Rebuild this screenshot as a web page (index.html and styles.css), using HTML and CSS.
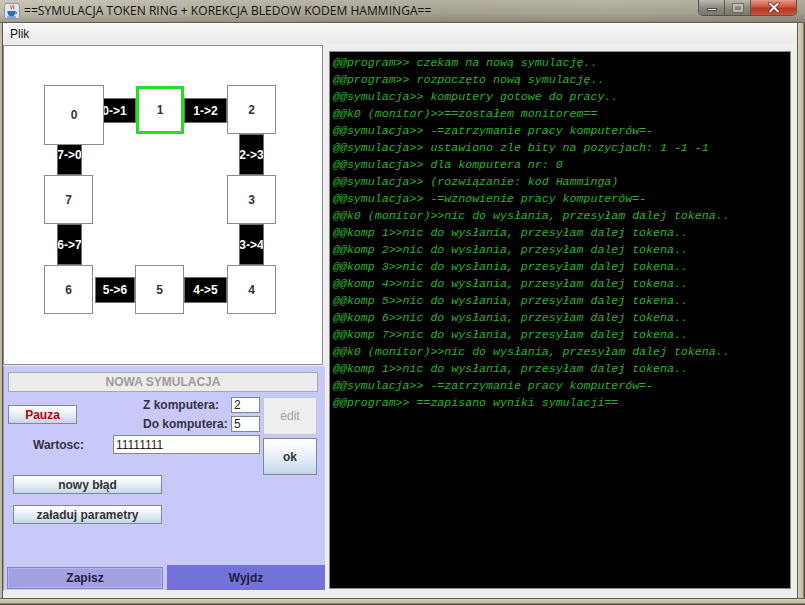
FILE: index.html
```html
<!DOCTYPE html>
<html>
<head>
<meta charset="utf-8">
<link rel="stylesheet" href="styles.css">
</head>
<body>
<div class="window">
  <div class="titlebar">
    <svg class="app-icon" width="16" height="16" viewBox="0 0 16 16">
      <rect x="0.5" y="0.5" width="15" height="15" rx="2" fill="#dfe6ee" stroke="#8a96a6"/>
      <path d="M7 2.5c-1.5 1.2 1.5 2 0 3.5M9.5 2c-1.8 1.4 1.6 2.3 0 4" stroke="#e0521c" stroke-width="1.2" fill="none"/>
      <path d="M3.5 8h8v1.2c0 2.5-1.8 4-4 4s-4-1.5-4-4z" fill="#2f6cb5"/>
      <path d="M11.5 9c1.6 0 1.6 2 0 2" stroke="#2f6cb5" stroke-width="1" fill="none"/>
      <path d="M3 14h9" stroke="#2f6cb5" stroke-width="1"/>
    </svg>
    <span class="title">==SYMULACJA TOKEN RING + KOREKCJA BLEDOW KODEM HAMMINGA==</span>
    <div class="wcontrols">
      <div class="wbtn wmin"><span class="glyph-min"></span></div>
      <div class="wbtn wmax"><span class="glyph-max"></span></div>
      <div class="wbtn wclose">
        <svg width="14" height="11" viewBox="0 0 14 11"><path d="M3 1.5l8 8M11 1.5l-8 8" stroke="#5a1a10" stroke-width="3.4" stroke-linecap="round"/><path d="M3 1.5l8 8M11 1.5l-8 8" stroke="#ffffff" stroke-width="2" stroke-linecap="round"/></svg>
      </div>
    </div>
  </div>
  <div class="middle">
    <div class="frame-l"></div>
    <div class="client">
      <div class="menubar"><span class="menu-item">Plik</span></div>
      <div class="main">
        <div class="leftcol">
          <div class="canvas">
            <div class="link h" style="left:89px;top:52px;width:43px;height:25px">0-&gt;1</div>
            <div class="link h" style="left:180px;top:52px;width:43px;height:25px">1-&gt;2</div>
            <div class="link v" style="left:235px;top:88px;width:25px;height:41px">2-&gt;3</div>
            <div class="link v" style="left:235px;top:178px;width:25px;height:41px">3-&gt;4</div>
            <div class="link h" style="left:180px;top:231px;width:43px;height:26px">4-&gt;5</div>
            <div class="link h" style="left:91px;top:231px;width:40px;height:26px">5-&gt;6</div>
            <div class="link v" style="left:53px;top:178px;width:25px;height:41px">6-&gt;7</div>
            <div class="link v" style="left:53px;top:88px;width:25px;height:41px">7-&gt;0</div>
            <div class="node big" style="left:40px;top:39px">0</div>
            <div class="node active" style="left:132px;top:40px">1</div>
            <div class="node" style="left:223px;top:39px">2</div>
            <div class="node" style="left:223px;top:129px">3</div>
            <div class="node" style="left:223px;top:219px">4</div>
            <div class="node" style="left:131px;top:219px">5</div>
            <div class="node" style="left:40px;top:219px">6</div>
            <div class="node" style="left:40px;top:129px">7</div>
          </div>
          <div class="panel">
            <div class="ns-bar">NOWA SYMULACJA</div>
            <div class="form">
              <div class="form-left">
                <div class="r1">
                  <div class="mbtn pauza">Pauza</div>
                  <div class="pair-grid">
                    <span class="lbl">Z komputera:</span><div class="input small">2</div>
                    <span class="lbl">Do komputera:</span><div class="input small">5</div>
                  </div>
                </div>
                <div class="r2">
                  <span class="lbl wart">Wartosc:</span>
                  <div class="input wide">11111111</div>
                </div>
              </div>
              <div class="form-right">
                <div class="mbtn edit disabled">edit</div>
                <div class="mbtn ok">ok</div>
              </div>
            </div>
            <div class="mbtn long first">nowy błąd</div>
            <div class="mbtn long second">załaduj parametry</div>
            <div class="bottom-row">
              <div class="zapisz">Zapisz</div>
              <div class="wyjdz">Wyjdz</div>
            </div>
          </div>
        </div>
        <div class="rightcol">
          <div class="console">
            <div class="ln">@@program&gt;&gt; czekam na nową symulację..</div>
            <div class="ln">@@program&gt;&gt; rozpoczęto nową symulację..</div>
            <div class="ln">@@symulacja&gt;&gt; komputery gotowe do pracy..</div>
            <div class="ln">@@k0 (monitor)&gt;&gt;==zostałem monitorem==</div>
            <div class="ln">@@symulacja&gt;&gt; -=zatrzymanie pracy komputerów=-</div>
            <div class="ln">@@symulacja&gt;&gt; ustawiono zle bity na pozycjach: 1 -1 -1</div>
            <div class="ln">@@symulacja&gt;&gt; dla komputera nr: 0</div>
            <div class="ln">@@symulacja&gt;&gt; (rozwiązanie: kod Hamminga)</div>
            <div class="ln">@@symulacja&gt;&gt; -=wznowienie pracy komputerów=-</div>
            <div class="ln">@@k0 (monitor)&gt;&gt;nic do wysłania, przesyłam dalej tokena..</div>
            <div class="ln">@@komp 1&gt;&gt;nic do wysłania, przesyłam dalej tokena..</div>
            <div class="ln">@@komp 2&gt;&gt;nic do wysłania, przesyłam dalej tokena..</div>
            <div class="ln">@@komp 3&gt;&gt;nic do wysłania, przesyłam dalej tokena..</div>
            <div class="ln">@@komp 4&gt;&gt;nic do wysłania, przesyłam dalej tokena..</div>
            <div class="ln">@@komp 5&gt;&gt;nic do wysłania, przesyłam dalej tokena..</div>
            <div class="ln">@@komp 6&gt;&gt;nic do wysłania, przesyłam dalej tokena..</div>
            <div class="ln">@@komp 7&gt;&gt;nic do wysłania, przesyłam dalej tokena..</div>
            <div class="ln">@@k0 (monitor)&gt;&gt;nic do wysłania, przesyłam dalej tokena..</div>
            <div class="ln">@@komp 1&gt;&gt;nic do wysłania, przesyłam dalej tokena..</div>
            <div class="ln">@@symulacja&gt;&gt; -=zatrzymanie pracy komputerów=-</div>
            <div class="ln">@@program&gt;&gt; ==zapisano wyniki symulacji==</div>
          </div>
        </div>
      </div>
    </div>
    <div class="frame-r"></div>
  </div>
  <div class="frame-b"></div>
</div>
</body>
</html>
```
FILE: styles.css
```css
* { box-sizing: border-box; }
html, body { margin: 0; padding: 0; }
body {
  width: 805px;
  height: 605px;
  overflow: hidden;
  background: #b5b09f;
  font-family: "Liberation Sans", Arial, sans-serif;
}
.window {
  width: 805px;
  height: 605px;
  display: flex;
  flex-direction: column;
}
.titlebar {
  height: 23px;
  display: flex;
  align-items: flex-start;
  background:
    linear-gradient(to bottom, rgba(255,255,255,0.18), rgba(255,255,255,0) 60%, rgba(0,0,0,0.15)),
    linear-gradient(to right, #bdb8a8 0%, #aca797 30%, #a39e8e 55%, #a8a393 75%, #9f9a8a 100%);
  border-bottom: 1px solid #5e5b52;
}
.app-icon { margin: 3px 0 0 4px; flex: none; }
.title {
  margin: 3px 0 0 4px;
  font-family: "Open Sans", "Noto Sans", sans-serif;
  font-size: 12px;
  line-height: 16px;
  color: #111;
  letter-spacing: 0.05px;
  white-space: nowrap;
}
.wcontrols {
  margin-left: auto;
  margin-right: 8px;
  display: flex;
  height: 16px;
  border: 1px solid #54524a;
  border-top: none;
  border-radius: 0 0 5px 5px;
  overflow: hidden;
}
.wbtn {
  height: 15px;
  display: flex;
  align-items: center;
  justify-content: center;
}
.wmin, .wmax {
  width: 26px;
  background: linear-gradient(to bottom, #bcb8ad, #8d897d 50%, #7a766a);
  border-right: 1px solid #5a584f;
}
.glyph-min {
  width: 10px; height: 3px; margin-top: 4px;
  background: #f2f2f2;
  border: 1px solid #4a4a4a;
}
.glyph-max {
  width: 10px; height: 8px;
  border: 2px solid #c8c6c0;
  outline: 1px solid #6a6860;
  opacity: 0.8;
}
.wclose {
  width: 45px;
  background: linear-gradient(to bottom, #e49a8a, #cc5740 45%, #b83520 55%, #c8553c);
}
.middle {
  height: 575px;
  display: flex;
}
.frame-l {
  width: 3px;
  background: linear-gradient(to right, #c8c2ac, #b9b39c 60%, #555 60%);
}
.frame-r {
  width: 8px;
  background: linear-gradient(to right, #5f5d55 0 1px, #d6cfb6 1px, #c3bb9d 6px, #4f4d45 7px);
}
.frame-b {
  height: 7px;
  background: linear-gradient(to bottom, #5f5d55 0 1px, #d6cfb6 1px, #c3bb9d 5px, #4f4d45 6px);
}
.client {
  width: 794px;
  display: flex;
  flex-direction: column;
  background: #eeeeee;
}
.menubar {
  height: 21px;
  background: linear-gradient(to bottom, #f8f8f8, #f0f0f0 50%, #ebebeb);
  border-top: 1px solid #ffffff;
  display: flex;
  align-items: center;
}
.menu-item {
  margin-left: 7px;
  font-size: 12px;
  color: #111;
}
.main {
  height: 554px;
  display: flex;
}
.leftcol {
  width: 322px;
  display: flex;
  flex-direction: column;
  background: #eeeeee;
}
.canvas {
  position: relative;
  margin-top: 1px;
  width: 320px;
  height: 320px;
  background: #ffffff;
  border: 1px solid #8c8c8c;
}
.node {
  position: absolute;
  width: 49px;
  height: 49px;
  background: #ffffff;
  border: 1px solid #8a8a8a;
  display: flex;
  align-items: center;
  justify-content: center;
  font-weight: bold;
  font-size: 12px;
  color: #333333;
}
.node.big { width: 60px; height: 60px; }
.node.active {
  width: 48px; height: 48px;
  border: 3px solid #20e020;
}
.link {
  position: absolute;
  background: #000000;
  border: 1px solid #707070;
  display: flex;
  align-items: center;
  justify-content: center;
  overflow: hidden;
  white-space: nowrap;
  color: #ffffff;
  font-weight: bold;
  font-size: 12px;
}
.panel {
  margin-top: 1px;
  height: 224px;
  background: #c8c8f9;
  border-left: 1px solid #9a9a9a;
  display: flex;
  flex-direction: column;
}
.ns-bar {
  margin: 6px 0 0 4px;
  width: 310px;
  height: 20px;
  background: #ececec;
  border: 1px solid #a6a6a6;
  color: #9c9c9c;
  font-weight: bold;
  font-size: 12px;
  text-align: center;
  line-height: 18px;
}
.form {
  margin: 5px 0 0 4px;
  display: flex;
}
.form-left {
  width: 252px;
  display: flex;
  flex-direction: column;
}
.r1 {
  height: 35px;
  display: flex;
  align-items: flex-start;
}
.mbtn {
  background: linear-gradient(to bottom, #ffffff 0%, #f1f5fa 35%, #dae6f1 70%, #c3d5e7 100%);
  border: 1px solid #7a8a99;
  display: flex;
  align-items: center;
  justify-content: center;
  font-weight: bold;
  font-size: 12px;
  color: #333333;
  white-space: nowrap;
}
.pauza {
  margin-top: 8px;
  width: 69px;
  height: 19px;
  color: #b80000;
}
.pair-grid {
  margin-left: 66px;
  display: grid;
  grid-template-columns: 88px 29px;
  grid-auto-rows: 16px;
  row-gap: 3px;
  align-items: center;
}
.lbl {
  font-weight: bold;
  font-size: 12px;
  color: #333340;
  white-space: nowrap;
}
.input {
  background: #ffffff;
  border: 1px solid #7a8a99;
  font-size: 12px;
  color: #222;
  padding-left: 2px;
  display: flex;
  align-items: center;
}
.input.small { height: 16px; width: 29px; }
.r2 {
  margin-top: 3px;
  height: 19px;
  display: flex;
  align-items: center;
}
.wart { margin-left: 25px; width: 80px; }
.input.wide { width: 147px; height: 19px; }
.form-right {
  margin-left: 3px;
  width: 54px;
  display: flex;
  flex-direction: column;
}
.edit { height: 38px; }
.disabled {
  background: #eeeeee;
  border-color: #c0c8d0;
  color: #a0a0a0;
  font-weight: normal;
}
.ok { margin-top: 3px; height: 37px; }
.long {
  margin-left: 9px;
  width: 149px;
  height: 19px;
}
.second { margin-top: 11px; }
.bottom-row {
  margin-top: auto;
  height: 25px;
  display: flex;
}
.zapisz {
  margin: 2px 0 1px 3px;
  width: 156px;
  background: #a2a2e2;
  border: 1px solid #8484b6;
  box-shadow: inset 0 0 0 1px #b4b4ec;
  display: flex;
  align-items: center;
  justify-content: center;
  font-weight: bold;
  font-size: 12px;
  color: #1c1c40;
}
.wyjdz {
  margin-left: 4px;
  flex: 1;
  background: #7272d8;
  display: flex;
  align-items: center;
  justify-content: center;
  font-weight: bold;
  font-size: 12px;
  color: #1c1c40;
}
.rightcol {
  width: 472px;
  background: #eeeeee;
  padding: 7px 6px 9px 4px;
  display: flex;
}
.console {
  flex: 1;
  background: #000000;
  border: 1px solid #8c8c8c;
  padding: 2px 0 0 3px;
  overflow: hidden;
}
.ln {
  font-family: "Liberation Mono", "Courier New", monospace;
  font-style: italic;
  font-size: 11.6px;
  line-height: 17px;
  color: #2cb42c;
  white-space: pre;
}
```
